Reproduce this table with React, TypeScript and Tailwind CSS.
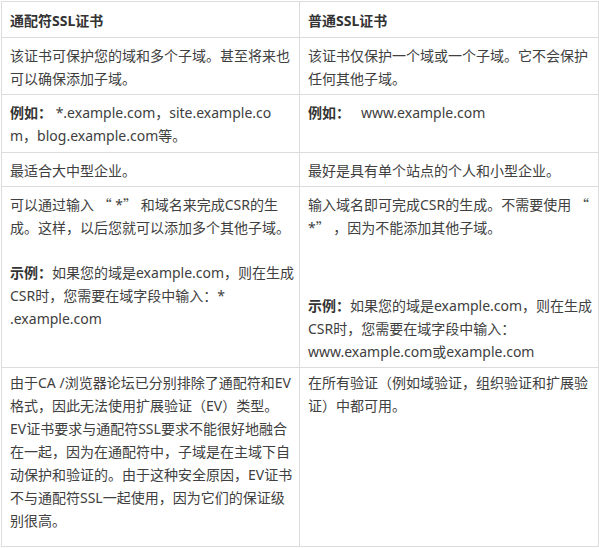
import React from 'react'

const font = { fontFamily: '"Noto Sans", "Noto Sans CJK SC", sans-serif' }

const Lines = ({ lines, className = '' }: { lines: React.ReactNode[]; className?: string }) => (
  <div className={className}>
    {lines.map((l, i) => (
      <div key={i} className="h-[23px] leading-[23px] whitespace-nowrap">
        {l}
      </div>
    ))}
  </div>
)

const Cell = ({
  children,
  head = false,
  pad = 'pt-[6px] pb-[4px]',
}: {
  children: React.ReactNode
  head?: boolean
  pad?: string
}) => (
  <td
    className={`border border-[#dcdcdc] px-2 align-top overflow-hidden ${pad} ${
      head ? 'font-bold text-[#333]' : 'text-[#404040]'
    }`}
  >
    {children}
  </td>
)

const B = ({ children }: { children: React.ReactNode }) => (
  <b className="font-bold text-[#333]">{children}</b>
)

// full-width quote marks, like the CJK face draws them
const Q = ({ children }: { children: React.ReactNode }) => (
  <span style={{ fontFamily: '"Noto Sans CJK SC", sans-serif' }}>{children}</span>
)

export default function App() {
  return (
    <div className="bg-white w-[599px] h-[548px] pl-px pt-px" style={font}>
      <table className="table-fixed border-collapse w-[597px] text-[14px]">
        <colgroup>
          <col className="w-[298px]" />
          <col className="w-[299px]" />
        </colgroup>
        <tbody>
          <tr>
            <Cell head pad="pt-[7px] pb-[5px]">
              <Lines lines={['通配符SSL证书']} />
            </Cell>
            <Cell head pad="pt-[7px] pb-[5px]">
              <Lines lines={['普通SSL证书']} />
            </Cell>
          </tr>
          <tr>
            <Cell>
              <Lines lines={['该证书可保护您的域和多个子域。甚至将来也', '可以确保添加子域。']} />
            </Cell>
            <Cell>
              <Lines lines={['该证书仅保护一个域或一个子域。它不会保护', '任何其他子域。']} />
            </Cell>
          </tr>
          <tr>
            <Cell pad="pt-[6px] pb-[5px]">
              <Lines
                lines={[
                  <>
                    <B>例如：</B> *.example.com，site.example.co
                  </>,
                  'm，blog.example.com等。',
                ]}
              />
            </Cell>
            <Cell pad="pt-[6px] pb-[5px]">
              <Lines
                lines={[
                  <>
                    <B>例如：</B>&nbsp;&nbsp; www.example.com
                  </>,
                ]}
              />
            </Cell>
          </tr>
          <tr>
            <Cell>
              <Lines lines={['最适合大中型企业。']} />
            </Cell>
            <Cell>
              <Lines lines={['最好是具有单个站点的个人和小型企业。']} />
            </Cell>
          </tr>
          <tr>
            <Cell>
              <Lines
                lines={[
                  <>
                    可以通过输入 <Q>“</Q> *<Q>”</Q> 和域名来完成CSR的生
                  </>,
                  '成。这样，以后您就可以添加多个其他子域。',
                ]}
              />
              <Lines
                className="mt-[22px]"
                lines={[
                  <>
                    <B>示例：</B>如果您的域是example.com，则在生成
                  </>,
                  'CSR时，您需要在域字段中输入：*',
                  '.example.com',
                ]}
              />
            </Cell>
            <Cell>
              <Lines
                lines={[
                  <>
                    输入域名即可完成CSR的生成。不需要使用 <Q>“</Q>
                  </>,
                  <>
                    *<Q>”</Q> ，因为不能添加其他子域。
                  </>,
                ]}
              />
              <Lines
                className="mt-[55px]"
                lines={[
                  <>
                    <B>示例：</B>如果您的域是example.com，则在生成
                  </>,
                  'CSR时，您需要在域字段中输入：',
                  'www.example.com或example.com',
                ]}
              />
            </Cell>
          </tr>
          <tr>
            <Cell pad="pt-[3px] pb-[14px]">
              <Lines
                lines={[
                  '由于CA /浏览器论坛已分别排除了通配符和EV',
                  '格式，因此无法使用扩展验证（EV）类型。',
                  'EV证书要求与通配符SSL要求不能很好地融合',
                  '在一起，因为在通配符中，子域是在主域下自',
                  '动保护和验证的。由于这种安全原因，EV证书',
                  '不与通配符SSL一起使用，因为它们的保证级',
                  '别很高。',
                ]}
              />
            </Cell>
            <Cell pad="pt-[3px] pb-[14px]">
              <Lines lines={['在所有验证（例如域验证，组织验证和扩展验', '证）中都可用。']} />
            </Cell>
          </tr>
        </tbody>
      </table>
    </div>
  )
}
